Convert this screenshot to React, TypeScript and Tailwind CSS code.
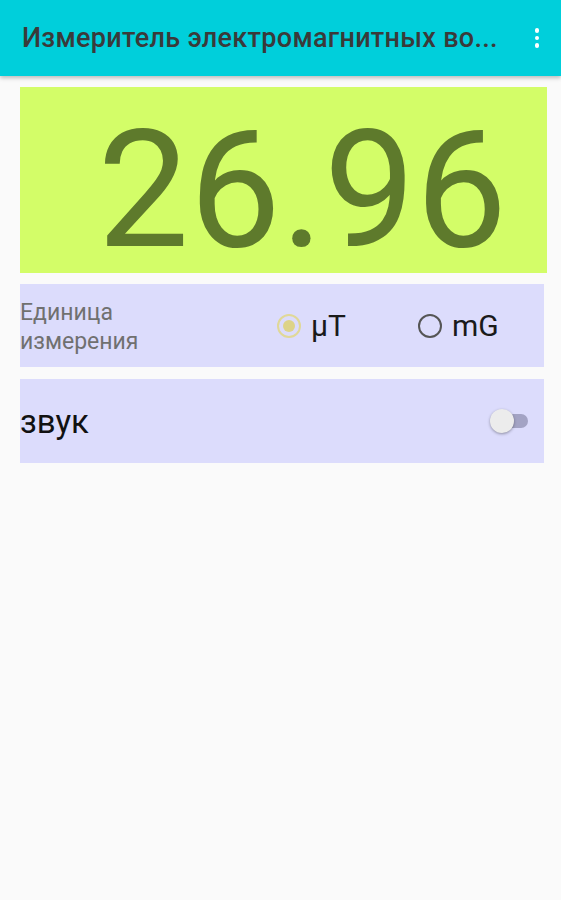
import React from "react";

export default function App() {
  return (
    <div className="min-h-[900px] w-[561px] bg-[#fafafa]" style={{ fontFamily: "Roboto, 'Noto Sans', sans-serif" }}>
      <div className="relative z-10 flex h-[76px] items-center bg-[#00cfdb] pl-[22px] pr-[14px] shadow-[0_2px_4px_rgba(0,0,0,0.25)]">
        <div className="min-w-0 flex-1 whitespace-nowrap text-[27px] font-medium leading-none tracking-[0.3px] text-[#3a3a3a]">
          Измеритель электромагнитных во...
        </div>
        <div className="flex w-[20px] flex-col items-center gap-[3px]">
          <span className="h-[4.5px] w-[4.5px] rounded-full bg-white" />
          <span className="h-[4.5px] w-[4.5px] rounded-full bg-white" />
          <span className="h-[4.5px] w-[4.5px] rounded-full bg-white" />
        </div>
      </div>

      <div className="flex flex-col pl-[20px] pt-[11px]">
        <div className="flex h-[186px] w-[527px] items-center justify-end bg-[#d3fd68] pr-[40px] pt-[20px]">
          <span className="text-[163px] leading-none text-[#5e7a2c]">26.96</span>
        </div>

        <div className="mt-[11px] flex h-[83px] w-[524px] items-center bg-[#dcdcfc]">
          <div className="w-[240px] pt-[2px] text-[23px] leading-[29px] text-[#707070]">
            Единица
            <br />
            измерения
          </div>
          <div className="ml-[17px] flex items-center">
            <span className="flex h-[24px] w-[24px] items-center justify-center rounded-full border-2 border-[#e0d898]">
              <span className="h-[12px] w-[12px] rounded-full bg-[#ddd388]" />
            </span>
            <span className="ml-[10px] text-[30px] leading-none text-[#1a1a1a]">μT</span>
          </div>
          <div className="ml-[72px] flex items-center">
            <span className="h-[24px] w-[24px] rounded-full border-2 border-[#555]" />
            <span className="ml-[10px] text-[30px] leading-none text-[#1a1a1a]">mG</span>
          </div>
        </div>

        <div className="mt-[12px] flex h-[84px] w-[524px] items-center justify-between bg-[#dcdcfc] pr-[16px]">
          <span className="text-[33px] leading-none text-[#111]">звук</span>
          <div className="relative h-[24px] w-[38px]">
            <span className="absolute left-[4px] top-[5px] h-[14px] w-[34px] rounded-full bg-[#a3a3c4]" />
            <span className="absolute left-0 top-0 h-[24px] w-[24px] rounded-full bg-[#ececec] shadow-[0_1px_3px_rgba(0,0,0,0.35)]" />
          </div>
        </div>
      </div>
    </div>
  );
}
